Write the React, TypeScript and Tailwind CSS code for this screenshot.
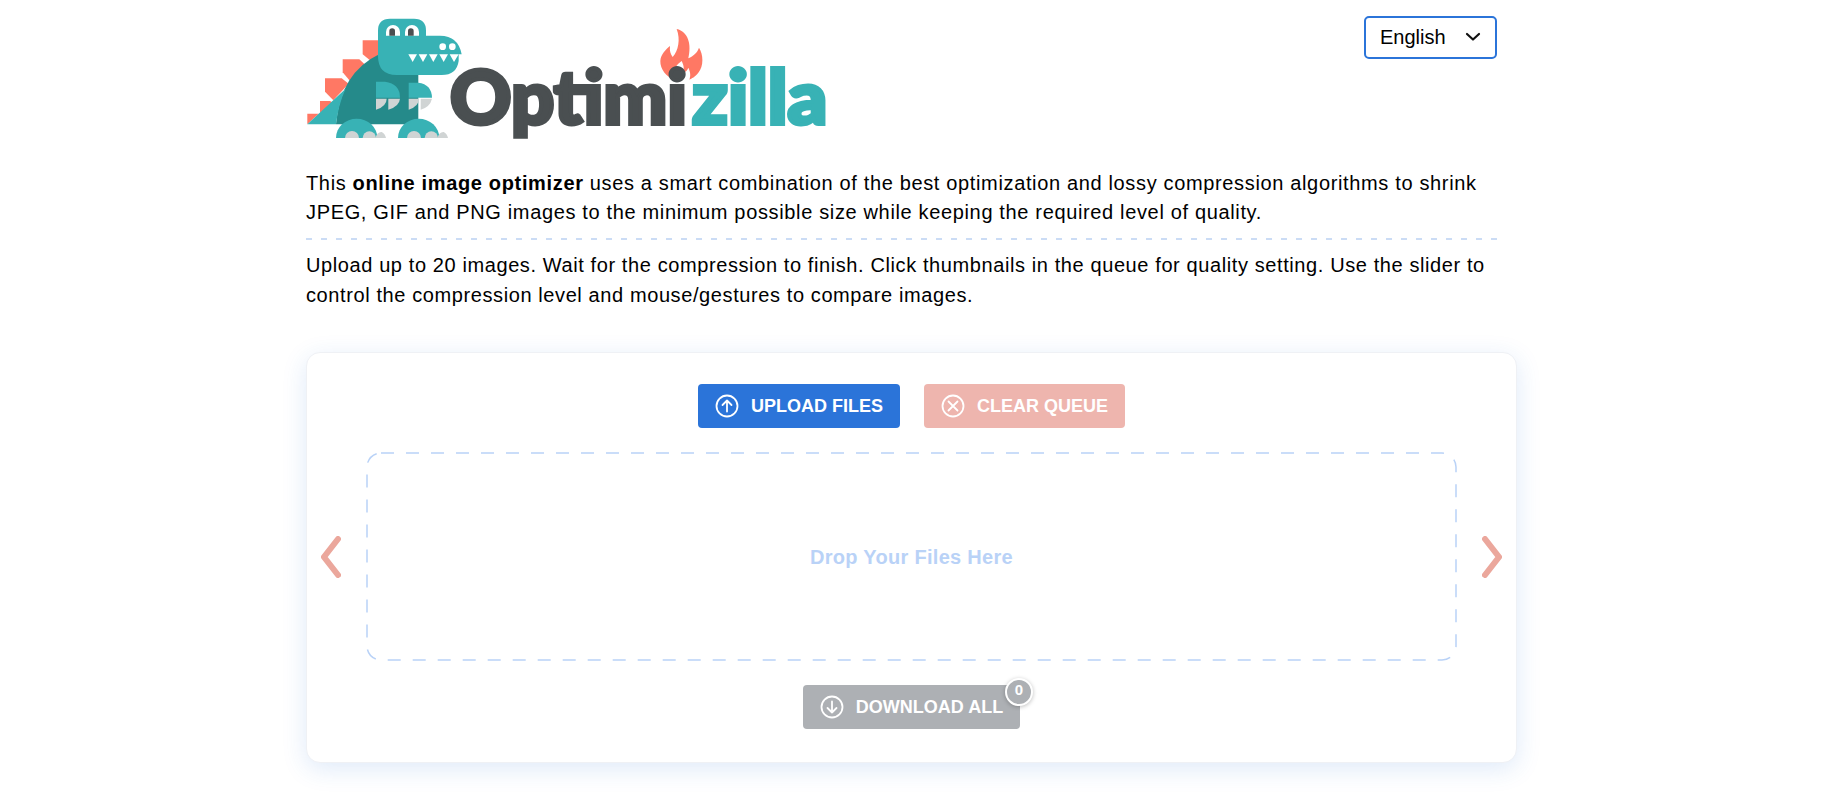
import React from "react";

const Logo = () => (
  <svg width="530" height="124" viewBox="0 0 1590 372" className="block" aria-label="Optimizilla">
    <g transform="translate(-48 -48)">
      <g fill="#ff7864">
        <path d="M218 118H270V160L240 178L218 160Z" />
        <path d="M158 175H208L224 190L180 240L158 214Z" />
        <path d="M105 232H155L176 248L130 298L105 272Z" />
        <path d="M90 300H120L130 306L90 336Z" />
        <path d="M52 338H86L52 370Z" />
      </g>
      <path d="M270 158Q150 215 138 370H385V200Z" fill="#258a8a" />
      <path d="M52 370L167 263Q145 310 138 370Z" fill="#38b2b5" />
      <path d="M300 53H372Q408 53 408 89V104H450Q505 104 515 160H506V180Q500 222 455 222H320Q264 222 264 165V89Q264 53 300 53Z" fill="#38b2b5" />
      <path d="M288 104V93A21 21 0 0 1 330 93V104Z" fill="#fff" />
      <path d="M345 104V93A21 21 0 0 1 387 93V104Z" fill="#fff" />
      <path d="M298 104V90A8.500 8.500 0 0 1 315 90V104Z" fill="#4a4f51" />
      <path d="M354 104V90A8.500 8.500 0 0 1 371 90V104Z" fill="#4a4f51" />
      <circle cx="458" cy="137" r="10" fill="#fff" />
      <circle cx="487" cy="137" r="10" fill="#fff" />
      <g fill="#fff">
        <path d="M355 160H381L368 183Z" />
        <path d="M386 160H412L399 183Z" />
        <path d="M417 160H443L430 183Z" />
        <path d="M448 160H474L461 183Z" />
        <path d="M479 160H506L492 183Z" />
      </g>
      <path d="M258 242H285Q330 248 330 290H258Z" fill="#38b2b5" />
      <path d="M258 293H290Q290 316 258 326Z" fill="#d0d4d4" />
      <path d="M295 293H330Q328 316 295 326Z" fill="#d0d4d4" />
      <path d="M356 245H385Q425 250 426 290H356Z" fill="#38b2b5" />
      <path d="M356 293H388Q386 316 356 326Z" fill="#d0d4d4" />
      <path d="M392 293H426Q420 318 392 326Z" fill="#d0d4d4" />
      {[0, 186].map((dx) => (
        <g key={dx} transform={`translate(${dx} 0)`}>
          <path d="M138 411A62 58 0 0 1 262 411Z" fill="#38b2b5" />
          <path d="M165 411A21 21 0 0 1 207 411Z" fill="#d0d4d4" />
          <path d="M218 411A20 20 0 0 1 258 411Z" fill="#d0d4d4" />
          <path d="M256 411Q262 392 275 393Q285 398 288 411Z" fill="#d0d4d4" />
        </g>
      ))}
      <g transform="translate(810 0)">
        <path d="M350 84C385 92 395 130 385 172C400 165 412 155 417 140C430 160 432 195 415 215C405 228 395 232 388 236C392 225 392 215 385 200C380 212 375 215 370 212C372 200 372 195 365 180C350 190 335 210 342 236C320 228 300 205 301 180C302 160 318 145 330 135C328 150 332 160 338 168C355 150 362 115 350 84Z" fill="#ff7864" />
      </g>
      <text x="480" y="368" fontFamily="Lato, Inter, sans-serif" fontWeight="900" fontSize="220" fill="#4a4f51" stroke="#4a4f51" strokeWidth="12" textLength="711" lengthAdjust="spacingAndGlyphs">Optimi</text>
      <text x="1206" y="368" fontFamily="Lato, Inter, sans-serif" fontWeight="900" fontSize="220" fill="#38b2b5" stroke="#38b2b5" strokeWidth="12" textLength="406" lengthAdjust="spacingAndGlyphs">zilla</text>
    </g>
  </svg>
);

const CircleArrow = ({ down }: { down?: boolean }) => (
  <svg width="24" height="24" viewBox="0 0 24 24" fill="none" stroke="#fff" strokeWidth="1.800" strokeLinecap="round" strokeLinejoin="round" className="shrink-0">
    <circle cx="12" cy="12" r="10.500" />
    {down ? <path d="M12 6.500V17.500M7.500 13L12 17.500L16.500 13" /> : <path d="M12 17.500V6.500M7.500 11L12 6.500L16.500 11" />}
  </svg>
);

const CircleX = () => (
  <svg width="24" height="24" viewBox="0 0 24 24" fill="none" stroke="#fff" strokeWidth="1.800" strokeLinecap="round" className="shrink-0">
    <circle cx="12" cy="12" r="10.500" />
    <path d="M7.500 7.500L16.500 16.500M16.500 7.500L7.500 16.500" />
  </svg>
);

const Arrow = ({ right }: { right?: boolean }) => (
  <svg width="20" height="42" viewBox="0 0 20 42" fill="none" stroke="#eba79c" strokeWidth="6" strokeLinecap="round" strokeLinejoin="miter" className="shrink-0">
    {right ? <path d="M3 3L17 21L3 39" /> : <path d="M17 3L3 21L17 39" />}
  </svg>
);

export default function App() {
  return (
    <div className="min-h-[804px] bg-white font-['Liberation_Sans',Arial,sans-serif] text-black">
      <div className="mx-auto w-[1212px] pt-4">
        <div className="w-[1191px]">
          <div className="flex items-start justify-between">
            <div className="pt-[1px]">
              <Logo />
            </div>
            <div className="flex h-[43px] w-[133px] items-center justify-between rounded-[5px] border-2 border-[#2b74d9] pb-[2px] pl-[14px] pr-[14px] text-[20px]">
              <span>English</span>
              <svg width="16" height="10" viewBox="0 0 16 10" fill="none" stroke="#111" strokeWidth="2.200" strokeLinecap="round" strokeLinejoin="round">
                <path d="M2 2L8 7.500L14 2" />
              </svg>
            </div>
          </div>
          <p className="mt-[28px] text-[20px] leading-[29px] tracking-[0.65px]">
            This <b>online image optimizer</b> uses a smart combination of the best optimization and lossy compression algorithms to shrink JPEG, GIF and PNG images to the minimum possible size while keeping the required level of quality.
          </p>
          <div className="mt-[11px] h-[2px] bg-[repeating-linear-gradient(90deg,#cbdcf5_0,#cbdcf5_6px,transparent_6px,transparent_15px)]" />
          <p className="mt-[10px] text-[20px] leading-[30px] tracking-[0.6px]">
            Upload up to 20 images. Wait for the compression to finish. Click thumbnails in the queue for quality setting. Use the slider to control the compression level and mouse/gestures to compare images.
          </p>
        </div>
        <div className="mt-[42px] h-[411px] w-[1211px] rounded-[14px] border border-[#eff1f5] bg-white pt-[31px] shadow-[0_6px_24px_rgba(43,116,217,0.15)]">
          <div className="flex justify-center gap-6">
            <div className="flex h-[44px] w-[202px] items-center justify-center gap-[12px] rounded-[4px] bg-[#2b74d9] text-[18px] font-bold text-white">
              <CircleArrow />
              <span>UPLOAD FILES</span>
            </div>
            <div className="flex h-[44px] w-[201px] items-center justify-center gap-[12px] rounded-[4px] bg-[#eeb5ae] text-[18px] font-bold text-white">
              <CircleX />
              <span>CLEAR QUEUE</span>
            </div>
          </div>
          <div className="mt-6 flex items-center justify-between px-[14px]">
            <Arrow />
            <div className="relative flex h-[209px] w-[1091px] items-center justify-center text-[20px] font-bold tracking-[0.3px] text-[#b9d2f7]">
              <svg width="1091" height="209" className="absolute inset-0" fill="none">
                <rect x="1" y="1" width="1089" height="207" rx="14" stroke="#b9d2f7" strokeWidth="1.500" strokeDasharray="13 12" />
              </svg>
              Drop Your Files Here
            </div>
            <Arrow right />
          </div>
          <div className="mt-6 flex justify-center">
            <div className="relative flex h-[44px] w-[217px] items-center justify-center gap-[12px] rounded-[4px] bg-[#adb0b4] text-[18px] font-bold text-white">
              <CircleArrow down />
              <span>DOWNLOAD ALL</span>
              <span className="absolute -right-[13px] -top-[7px] flex h-[28px] w-[28px] items-center justify-center rounded-full border-2 border-white bg-[#adb0b4] pb-[3px] text-[15px] font-bold shadow-[0_1px_4px_rgba(0,0,0,0.25)]">
                0
              </span>
            </div>
          </div>
        </div>
      </div>
    </div>
  );
}
